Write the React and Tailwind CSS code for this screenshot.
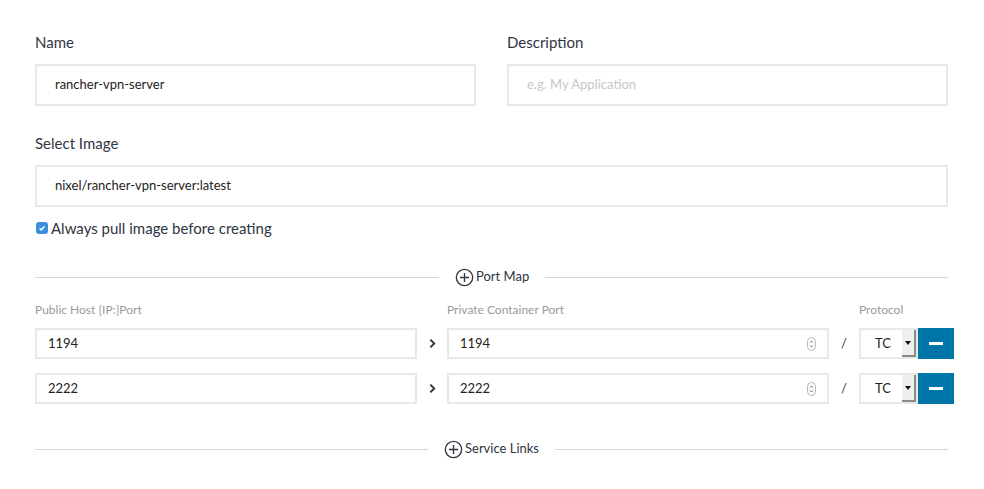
import React from 'react';

const PlusCircle = ({ className }) => (
    <svg viewBox="0 0 20 20" className={className} fill="none" stroke="currentColor" strokeWidth="1.4">
        <circle cx="10" cy="10" r="8.6" />
        <path d="M10 5.2v9.6M5.2 10h9.6" />
    </svg>
);

const Divider = ({ label, left }) => (
    <div className="flex items-center h-[20px]">
        <div className={`${left} h-px bg-[#d4d6d8]`} />
        <div className="flex items-center px-[16px] text-[13px] text-[#2f3542]">
            <PlusCircle className="w-[19px] h-[19px] mr-[2px] text-[#2f3542]" />
            {label}
        </div>
        <div className="flex-1 h-px bg-[#d4d6d8]" />
    </div>
);

const Spinner = () => (
    <svg viewBox="0 0 9 14" className="w-[9px] h-[14px]" fill="none">
        <rect x="0.5" y="0.5" width="8" height="13" rx="4" stroke="#b8b8b8" />
        <path d="M3 5.5 4.5 4 6 5.5M3 8.5 4.5 10 6 8.5" stroke="#555" strokeWidth="0.9" />
    </svg>
);

const PortRow = ({ value }) => (
    <div className="flex items-center h-[31px]">
        <div className="w-[382px] shrink-0 h-full border-2 border-[#e6e9e9] flex items-center pl-[11px] text-[13px] text-[#222]">{value}</div>
        <div className="w-[30px] shrink-0 flex justify-center">
            <svg viewBox="0 0 8 12" className="w-[7px] h-[11px]" fill="none" stroke="#2f3542" strokeWidth="2.2">
                <path d="M1.5 1.5 6 6l-4.5 4.5" />
            </svg>
        </div>
        <div className="w-[382px] shrink-0 h-full border-2 border-[#e6e9e9] flex items-center pl-[11px] pr-[11px] text-[13px] text-[#222]">
            <span className="flex-1">{value}</span>
            <Spinner />
        </div>
        <div className="w-[30px] shrink-0 flex justify-center text-[13px] text-[#2f3542]">/</div>
        <div className="w-[59px] shrink-0 h-full border-2 border-[#e6e9e9] flex items-center text-[13px] text-[#222]">
            <span className="flex-1 pl-[14px]">TC</span>
            <span className="w-[14px] h-full bg-[#efefef] border-r-2 border-b-2 border-[#8a8a8a] flex items-center justify-center">
                <svg viewBox="0 0 6 4" className="w-[6px] h-[4px]"><path d="M0 0h6L3 4z" fill="#111" /></svg>
            </span>
        </div>
        <button className="w-[36px] shrink-0 h-[31px] bg-[#0075a8] flex items-center justify-center">
            <span className="w-[14px] h-[3px] bg-white" />
        </button>
    </div>
);

export default function App() {
    return (
        <div className="w-[984px] h-[489px] bg-white pl-[35px] pr-[36px] pt-[32px] overflow-hidden" style={{ fontFamily: 'Lato, "Open Sans", sans-serif' }}>
            <div className="flex gap-[31px]">
                <div className="flex-1">
                    <div className="text-[15px] text-[#2f3542] h-[20px] leading-[20px]">Name</div>
                    <div className="mt-[12px] h-[42px] border-2 border-[#e6e9e9] flex items-center pl-[18px] text-[13px] text-[#222]">rancher-vpn-server</div>
                </div>
                <div className="flex-1">
                    <div className="text-[15px] text-[#2f3542] h-[20px] leading-[20px]">Description</div>
                    <div className="mt-[12px] h-[42px] border-2 border-[#e6e9e9] flex items-center pl-[18px] text-[13px] text-[#c4c7cc]">e.g. My Application</div>
                </div>
            </div>
            <div className="mt-[27px] text-[15px] text-[#2f3542] h-[20px] leading-[20px]">Select Image</div>
            <div className="mt-[12px] h-[42px] border-2 border-[#e6e9e9] flex items-center pl-[18px] text-[13px] text-[#222]">nixel/rancher-vpn-server:latest</div>
            <div className="mt-[11px] flex items-center text-[15px] text-[#2f3542] h-[20px]">
                <span className="w-[12px] h-[12px] rounded-[3px] bg-[#3b8fdc] flex items-center justify-center mr-[3px] ml-px">
                    <svg viewBox="0 0 10 10" className="w-[8px] h-[8px]" fill="none" stroke="white" strokeWidth="1.8"><path d="M2 5.2 4.2 7.3 8 2.8" /></svg>
                </span>
                Always pull image before creating
            </div>
            <div className="mt-[29px]">
                <Divider label="Port Map" left="w-[404px]" />
            </div>
            <div className="mt-[15px] flex text-[12px] text-[#9a9a9a] h-[16px] leading-[16px]">
                <div className="w-[412px] shrink-0">Public Host [IP:]Port</div>
                <div className="w-[412px] shrink-0">Private Container Port</div>
                <div className="shrink-0">Protocol</div>
            </div>
            <div className="mt-[10px] flex flex-col gap-[14px]">
                <PortRow value="1194" />
                <PortRow value="2222" />
            </div>
            <div className="mt-[35px]">
                <Divider label="Service Links" left="w-[393px]" />
            </div>
        </div>
    );
}
